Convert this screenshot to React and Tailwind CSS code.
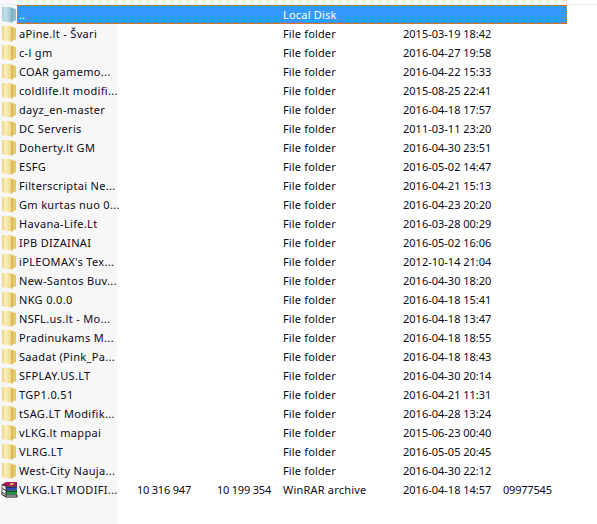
const ROWS = [
  ['aPine.lt - Švari', '2015-03-19 18:42'],
  ['c-l gm', '2016-04-27 19:58'],
  ['COAR gamemo...', '2016-04-22 15:33'],
  ['coldlife.lt modifi...', '2015-08-25 22:41'],
  ['dayz_en-master', '2016-04-18 17:57'],
  ['DC Serveris', '2011-03-11 23:20'],
  ['Doherty.lt GM', '2016-04-30 23:51'],
  ['ESFG', '2016-05-02 14:47'],
  ['Filterscriptai Ne...', '2016-04-21 15:13'],
  ['Gm kurtas nuo 0...', '2016-04-23 20:20'],
  ['Havana-Life.Lt', '2016-03-28 00:29'],
  ['IPB DIZAINAI', '2016-05-02 16:06'],
  ["iPLEOMAX's Tex...", '2012-10-14 21:04'],
  ['New-Santos Buv...', '2016-04-30 18:20'],
  ['NKG 0.0.0', '2016-04-18 15:41'],
  ['NSFL.us.lt - Mo...', '2016-04-18 13:47'],
  ['Pradinukams M...', '2016-04-18 18:55'],
  ['Saadat (Pink_Pa...', '2016-04-18 18:43'],
  ['SFPLAY.US.LT', '2016-04-30 20:14'],
  ['TGP1.0.51', '2016-04-21 11:31'],
  ['tSAG.LT Modifik...', '2016-04-28 13:24'],
  ['vLKG.lt mappai', '2015-06-23 00:40'],
  ['VLRG.LT', '2016-05-05 20:45'],
  ['West-City Nauja...', '2016-04-30 22:12'],
]

function FolderIcon({ up }) {
  const id = up ? 'folder-up' : 'folder'
  const stops = up ? ['#a8cfdc', '#c3dfe8', '#8dbccd'] : ['#e9d27e', '#fbf0bd', '#ecd27a']
  const back = up ? '#8fbccd' : '#e6c968'
  const crease = up ? '#6f9fb5' : '#c9a546'
  return (
    <svg width="16" height="17" viewBox="0 0 16 17" className="shrink-0">
      <defs>
        <linearGradient id={id} x1="0" x2="1" y1="0" y2="0">
          <stop offset="0" stopColor={stops[0]} />
          <stop offset="0.35" stopColor={stops[1]} />
          <stop offset="1" stopColor={stops[2]} />
        </linearGradient>
      </defs>
      <path d="M10 1.5 L15 3 V14.5 L10 15.5 Z" fill={back} />
      <path d="M1 1 L9.5 1 L11 2.5 V16.5 L2.5 15.5 L1 14.5 Z" fill={`url(#${id})`} />
      <path d="M11 2.5 V16.5" stroke={crease} strokeWidth="1" />
    </svg>
  )
}

function RarIcon() {
  return (
    <svg width="17" height="17" viewBox="0 0 17 17" className="shrink-0">
      <path d="M5 1 H16 V5.5 H5 L1 3.5 Z" fill="#a3195b" />
      <path d="M5 6 H16 V9.5 H5 L1 7.5 Z" fill="#2a4fb0" />
      <path d="M5 10 H16 V13.5 H5 L1 11.5 Z" fill="#1c9a44" />
      <path d="M1 3.5 L5 6 H16 M1 7.5 L5 10 H16 M1 11.5 L5 14 H16 V16 H5 L1 13.5 Z" fill="none" stroke="#111" strokeWidth="1" />
      <path d="M1 3.5 L5 5.5 V15.5 L1 13.5 Z" fill="#eeeeee" stroke="#111" strokeWidth="0.7" />
      <path d="M1.5 7.5 L5 9.5 M1.5 11.5 L5 13.5" stroke="#111" strokeWidth="0.8" />
      <path d="M9 2.5 L13 2 L12 4 L9 4 Z" fill="#e8d24a" />
    </svg>
  )
}

function Row({ name, date, type = 'File folder', icon }) {
  return (
    <div className="flex h-[19px] items-center">
      <div className="flex h-full w-[117px] shrink-0 items-center bg-[#f7f7f7] pl-[1px]">
        <span className="flex w-[18px] shrink-0">{icon}</span>
        <span className="whitespace-nowrap tracking-[0.33px]">{name}</span>
      </div>
      <div className="w-[160px] shrink-0" />
      <div className="w-[120px] shrink-0 whitespace-nowrap pl-[6px] tracking-[0.15px]">{type}</div>
      <div className="w-[100px] shrink-0 whitespace-nowrap pl-[6px]">{date}</div>
    </div>
  )
}

export default function App() {
  return (
    <div className="flex h-[524px] w-[597px] flex-col overflow-hidden bg-white font-['Noto_Sans',sans-serif] text-[11px] leading-[19px] text-[#0a0a20]">
      {/* column header edge */}
      <div className="flex h-[5px] shrink-0 border-b border-[#e6eefb]">
        <div className="w-[117px] border-r border-[#e3ebfb] bg-[#f8f9ff]" />
        <div className="w-[80px] border-r border-[#e3ebfb] bg-[#f8f9ff]" />
        <div className="w-[80px] border-r border-[#e3ebfb] bg-[#f8f9ff]" />
        <div className="w-[120px] border-r border-[#e3ebfb] bg-[#f8f9ff]" />
        <div className="w-[100px] border-r border-[#e3ebfb] bg-[#f8f9ff]" />
        <div className="w-[70px] border-r border-[#e3ebfb] bg-[#f8f9ff]" />
      </div>

      {/* parent dir row, selected */}
      <div className="flex h-[19px] shrink-0">
        <div className="flex w-[17px] shrink-0 items-center bg-[#f7f7f7] pl-[1px]">
          <FolderIcon up />
        </div>
        <div className="flex h-full w-[550px] items-center border border-dotted border-[#e07820] bg-[#3399ff] text-white">
          <span className="w-[265px] shrink-0 pl-[1px]">..</span>
          <span className="tracking-[0.2px]">Local Disk</span>
        </div>
      </div>

      {ROWS.map(([name, date]) => (
        <Row key={name} name={name} date={date} icon={<FolderIcon />} />
      ))}

      <div className="flex h-[19px] items-center">
        <div className="flex h-full w-[117px] shrink-0 items-center bg-[#f7f7f7] pl-[1px]">
          <span className="flex w-[18px] shrink-0">
            <RarIcon />
          </span>
          <span className="whitespace-nowrap tracking-[0.33px]">VLKG.LT MODIFI...</span>
        </div>
        <div className="w-[74px] shrink-0 whitespace-nowrap text-right tracking-[-0.2px]">10 316 947</div>
        <div className="w-[80px] shrink-0 whitespace-nowrap text-right tracking-[-0.2px]">10 199 354</div>
        <div className="w-[126px] shrink-0 whitespace-nowrap pl-[12px] tracking-[0.2px]">WinRAR archive</div>
        <div className="w-[100px] shrink-0 whitespace-nowrap pl-[6px]">2016-04-18 14:57</div>
        <div className="whitespace-nowrap pl-[6px] tracking-[-0.2px]">09977545</div>
      </div>

      <div className="min-h-0 flex-1">
        <div className="h-full w-[117px] bg-[#f7f7f7]" />
      </div>
    </div>
  )
}
